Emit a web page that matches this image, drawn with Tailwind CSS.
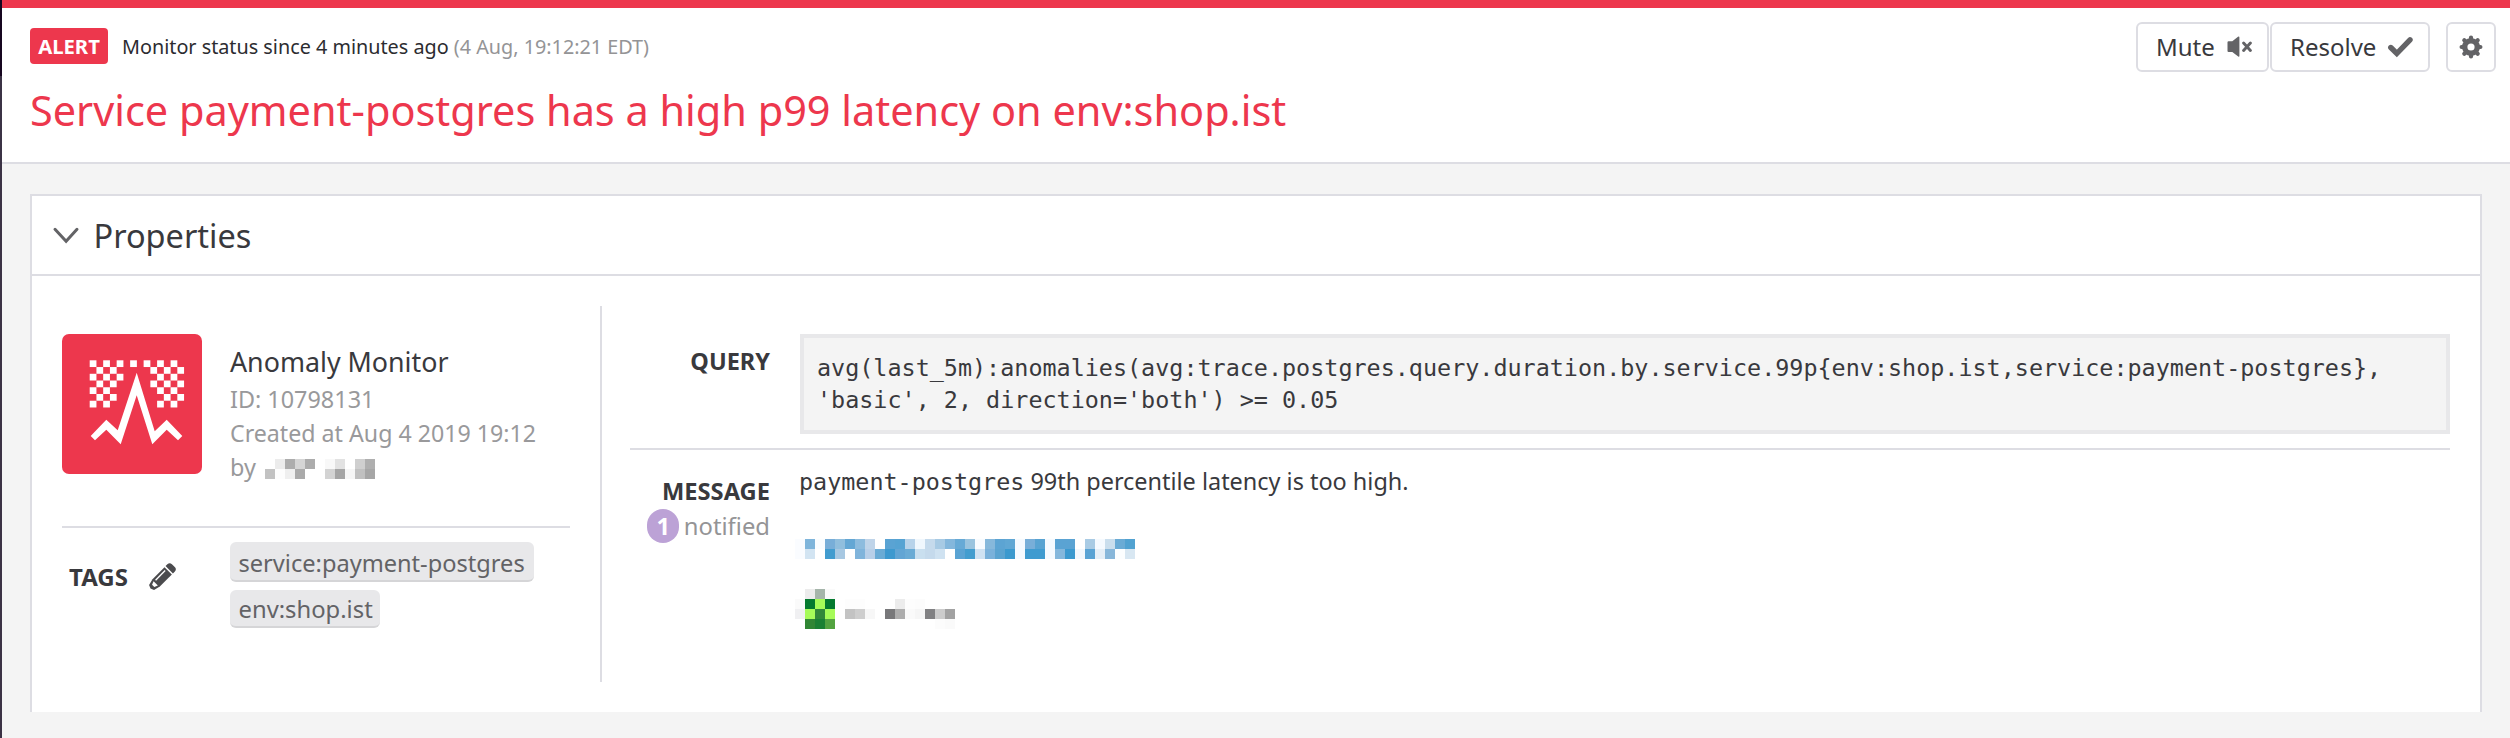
<!DOCTYPE html>
<html lang="en">
<head>
<meta charset="utf-8">
<title>Monitor status</title>
<script src="https://cdn.jsdelivr.net/npm/@tailwindcss/browser@4"></script>
</head>
<body class="flex h-[738px] w-[2510px] overflow-hidden bg-[#f4f4f4] font-['Noto_Sans',sans-serif] text-[#39393d]">
  <div class="flex w-[2px] shrink-0 flex-col bg-[#3b3245]"><div class="h-[76px] bg-[#160620]"></div></div>
  <div class="flex min-w-0 grow flex-col">
    <header class="h-[164px] border-t-8 border-b-2 border-t-[#ed374d] border-b-[#dddde3] bg-white pt-[14px] pr-[14px] pl-7">
      <div class="flex h-[50px] items-center">
        <div class="mb-[2px] flex items-center">
          <span class="flex h-9 w-[78px] items-center justify-center rounded bg-[#ed374d] text-[20.3px] leading-9 font-bold text-white">ALERT</span>
          <span class="ml-[14px] pt-px text-[19.8px] leading-9 whitespace-pre text-[#2c2c30]">Monitor status since 4 minutes ago <span class="text-[#949496]">(4 Aug, 19:12:21 EDT)</span></span>
        </div>
        <div class="ml-auto flex text-2xl leading-[46px]">
          <button class="flex h-[50px] w-[133px] items-center rounded-md border-2 border-[#dddde3] pl-[18px]">Mute
            <svg class="ml-3" width="25" height="22" viewBox="0 0 25 22" fill="#636366"><path d="M.5 6.3Q.5 5.2 1.6 5.2H5.3L11 .8Q12.4 .2 12.4 1.4V20Q12.4 21 11.2 20.5L5.3 16H1.6Q.5 16 .5 15Z"/><path d="M16.6 7l6.8 7.4M23.4 7l-6.8 7.4" stroke="#636366" stroke-width="2.9" stroke-linecap="round"/></svg>
          </button>
          <button class="ml-px flex h-[50px] w-[160px] items-center rounded-md border-2 border-[#dddde3] pl-[18px]">Resolve
            <svg class="ml-[11px]" width="27" height="22" viewBox="0 0 27 22"><path d="M3.8 11.5l6 6L23 3.8" fill="none" stroke="#636366" stroke-width="5.4" stroke-linecap="round"/></svg>
          </button>
          <button class="ml-4 flex h-[50px] w-[50px] items-center justify-center rounded-md border-2 border-[#dddde3]">
            <svg width="24" height="24" viewBox="-12 -12 24 24" fill="none" stroke="#636366"><circle r="6.3" stroke-width="5.4"/><path d="M0-7V-9.4M0 7V9.4M-7 0H-9.4M7 0H9.4M-5-5L-6.7-6.7M5-5L6.7-6.7M-5 5L-6.7 6.7M5 5L6.7 6.7" stroke-width="4.2" stroke-linecap="round"/></svg>
          </button>
        </div>
      </div>
      <h1 class="mt-[10px] text-[41.45px] leading-[56px] text-[#ed374d]">Service payment-postgres has a high p99 latency on env:shop.ist</h1>
    </header>

    <section class="mt-[30px] mr-7 ml-7 h-[518px] border-x-2 border-t-2 border-[#dddde3] bg-white">
      <div class="flex h-20 items-center border-b-2 border-[#dddde3] pl-5">
        <svg width="28" height="18" viewBox="0 0 28 18" fill="none" stroke="#636366" stroke-width="3" stroke-linecap="round"><path d="M3 3.3L14.1 15.2L25 3.3"/></svg>
        <h2 class="ml-[13.5px] pt-[2px] text-[32.5px] leading-[76px]">Properties</h2>
      </div>
      <div class="flex pt-[30px] pr-[30px] pl-[30px]">
        <div class="h-[376px] w-[540px] shrink-0 border-r-2 border-[#dddde3] pt-7 pr-[30px]">
          <div class="flex h-[150px]">
            <svg class="shrink-0" width="140" height="140" viewBox="0 0 140 140"><rect width="140" height="140" rx="7" fill="#ed374d"/><g id="checker" fill="#fff"></g><path d="M28.7 102L44.3 85.7L55.7 96.3L74.7 38.7L92.7 97.3L104.7 85.7L120.3 102L116 106.3L104.7 95.7L90.3 110.3L74.7 61.3L58.7 110.3L44.3 95.7L33 106.3Z" fill="#fff"/></svg>
            <div class="ml-7 pt-2 text-[23.4px] leading-[34px] whitespace-nowrap text-[#99999b]">
              <div class="text-[26.8px] leading-10 text-[#39393d]">Anomaly Monitor</div>
              <div>ID: 10798131</div>
              <div class="text-[23.2px]">Created at Aug 4 2019 19:12</div>
              <div class="flex"><span class="w-[35px]">by</span><svg id="author" class="mt-[9px]" width="110" height="20"></svg></div>
            </div>
          </div>
          <div class="mt-[42px] flex border-t-2 border-[#dddde3] pt-[14px]">
            <div class="flex h-[70px] w-[168px] items-center pl-[7px] text-2xl font-bold">TAGS
              <svg class="mb-[2px] ml-[21px]" width="28" height="28" viewBox="0 0 28 28"><g transform="translate(1.5 26.5) rotate(-45)" fill="#4b4b4e"><path d="M0 0L1.5-3.5L8-5.2H25V5.2H8L1.5 3.5Z"/><path d="M26.5-5.2H29Q32.3-5.2 32.3-2V2Q32.3 5.2 29 5.2H26.5Z"/><path d="M3.8-1.6L7.4-3V3L3.8 1.6Z" fill="#fff"/><path d="M9.5-2.3H23" stroke="#fff" stroke-width="1.4"/></g></svg>
            </div>
            <div class="flex flex-col gap-2 text-[23.6px] text-[#636366]">
              <span class="h-10 w-[304px] rounded-md border-b-2 border-[#d5d5d7] bg-[#e8e8ea] pl-[8.5px] leading-[42px] whitespace-nowrap">service:payment-postgres</span>
              <span class="h-[38px] w-[150px] rounded-md border-b-2 border-[#d5d5d7] bg-[#e8e8ea] pl-[8.5px] text-[23.8px] leading-[38px] whitespace-nowrap">env:shop.ist</span>
            </div>
          </div>
        </div>
        <div class="grow pt-7 pl-7">
          <div class="flex gap-[30px] border-b-2 border-[#dddde3] pb-[14px]">
            <div class="w-[140px] pt-[10px] text-right text-[23.5px] leading-[34px] font-bold">QUERY</div>
            <pre class="h-[100px] grow border-4 border-[#e8e8ea] bg-[#f4f4f4] pt-[14px] pl-[13px] font-['DejaVu_Sans_Mono',monospace] text-[23.41px] leading-8">avg(last_5m):anomalies(avg:trace.postgres.query.duration.by.service.99p{env:shop.ist,service:payment-postgres},
'basic', 2, direction='both') &gt;= 0.05</pre>
          </div>
          <div class="flex gap-[30px]">
            <div class="w-[140px] pt-6 text-right leading-[34px]">
              <div class="text-[23.7px] font-bold">MESSAGE</div>
              <div class="mt-px flex justify-end text-[23.8px] leading-[34px] text-[#949496]"><span class="mr-[4.5px] h-[34px] w-8 rounded-full bg-[#bca2d6] text-center font-bold text-white">1</span>notified</div>
            </div>
            <div class="pt-[14px]">
              <p class="-ml-px text-[23.45px] leading-[34px] whitespace-nowrap"><code class="font-['DejaVu_Sans_Mono',monospace] text-[23.4px] leading-none">payment-postgres</code> 99th percentile latency is too high.</p>
              <svg id="recipient" class="mt-[41px] -ml-[5px]" width="340" height="20"></svg>
              <svg id="handle" class="mt-[30px] -ml-[5px]" width="340" height="40"></svg>
            </div>
          </div>
        </div>
      </div>
    </section>
  </div>
<script>
  // Redacted names: each row lists the 10px cell colours, "-" leaves a cell empty.
  const mosaics = {
    author: [
      '- ececec adadad d5d5d5 acacac - f8f8f8 e2e2e2 - cfcfcf afafaf',
      'c2c2c2 fdfdfd efefef aaaaaa - - d3d3d3 a5a5a5 f6f6f6 c0c0c0 a6a6a6'],
    recipient: [
      'fafcff 7fb5db fafdff 78aed8 90bedd 64a7d4 8dbcde bfd4e9 - 5aa3d3 56a3d3 b8d3ea f0f7fd c5daec a7cae4 84b7dc 67aad6 9ac4df f7fbff 86b8db 5ca4d3 60a7d4 f5faff 78aed8 58a3d2 f5faff 5aa3d3 5aa3d3 - a9cbe4 f5faff cadeed 6aabd5 51a2d1',
      'fafcff d2e4f2 - 429ccf a7c8e2 - 80b4db b8cfe8 6aabd5 3d99cf 62a5d4 6aabd5 c9dfef c5daec cfe2f1 - 5aa3d3 429dcf cfe2f2 7ab1da 5aa3d0 3b99ce f5faff 3f9bd0 3f9bd0 f5faff 84b7dc 3b99cf f3f8fd 5aa3d4 e6eff7 88b7da fcfeff d8e7f2'],
    handle: [
      '- ececec a5b5aa fafafa',
      'fafafa 047a2f a6fb59 047a2f - fdfdfd fdfdfd - - - ececec fdfdfd fcfcfc',
      'f0f0f2 a6fb59 32883a a6fb59 - c3c3c3 cecece f7f7f7 - 78787a adadad fafafa f6f6f6 818183 cccccc a2a2a2',
      '- 308634 1a8033 53a340 - - - - - - - - - - fcfcfc fafafa']
  };
  for (const [id, rows] of Object.entries(mosaics))
    document.getElementById(id).innerHTML = rows.map((r, y) => r.split(' ').map((c, x) =>
      c === '-' ? '' : `<rect x="${x * 10}" y="${y * 10}" width="10" height="10" fill="#${c}"/>`).join('')).join('');
  // Checkerboard above the anomaly line.
  const cells = [[0,2,4,6,8,10,12],[1,3,9,11,13],[0,2,4,10,12],[1,3,9,11,13],[0,2,10,12],[1,3,11,13],[0,2,10,12]];
  document.getElementById('checker').innerHTML = cells.map((r, y) => r.map(x =>
    `<rect x="${27.7 + x * 6.74}" y="${26.3 + y * 6.74}" width="6.74" height="6.74"/>`).join('')).join('');
</script>
</body>
</html>
